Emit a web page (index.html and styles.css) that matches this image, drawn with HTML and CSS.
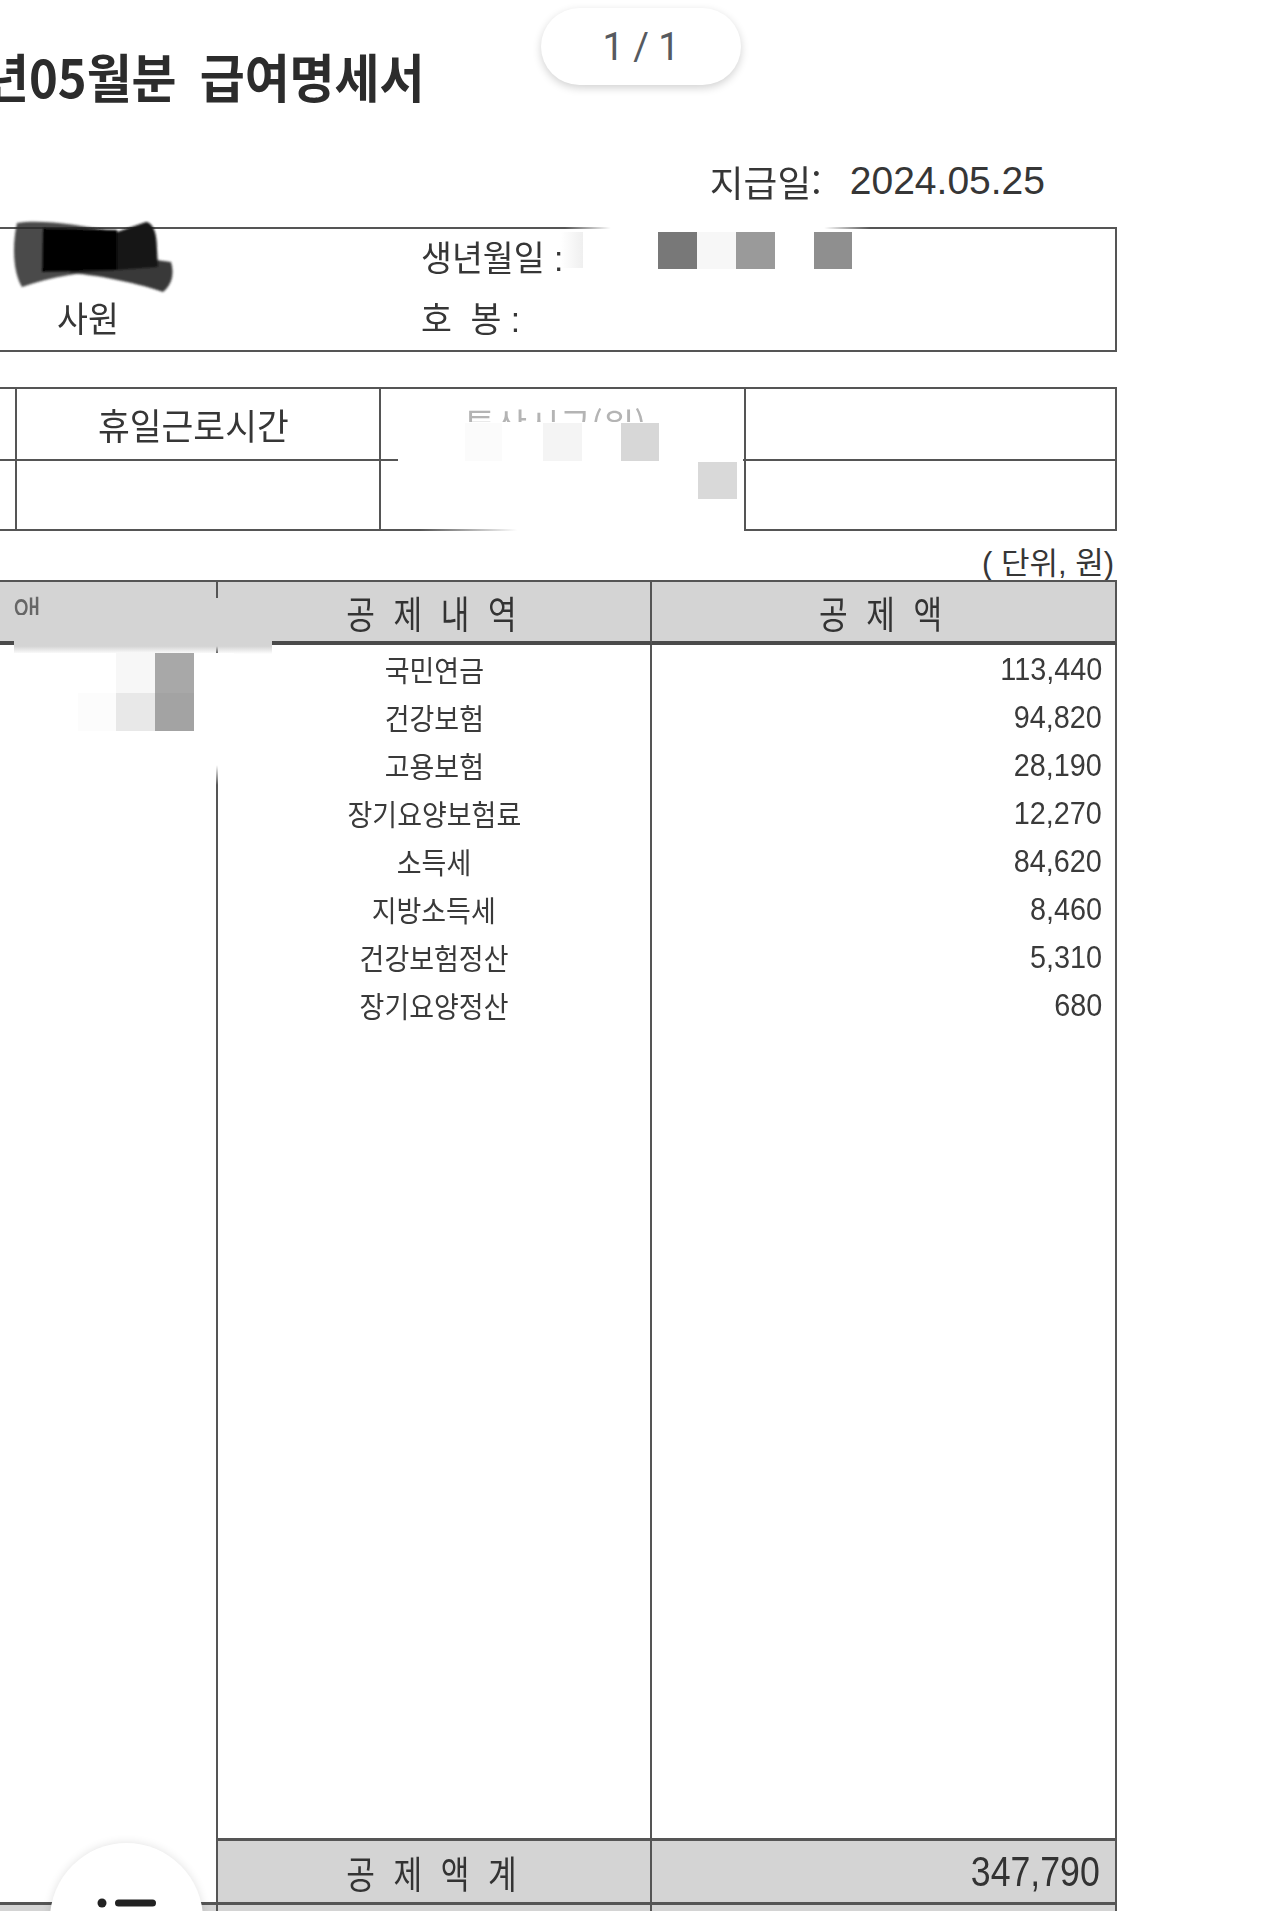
FILE: index.html
```html
<!DOCTYPE html>
<html lang="ko">
<head>
<meta charset="utf-8">
<title>급여명세서</title>
<link rel="stylesheet" href="styles.css">
</head>
<body>
<div class="viewer">
  <div class="doc">
    <div class="title"><span class="tx">년05월분 급여명세서</span></div>

    <div class="paydate"><span class="pd-label">지급일:</span><span class="pd-date">2024.05.25</span></div>

    <div class="info">
      <div class="info-cell"></div>
      <div class="info-cell"><span>생년월일 :</span></div>
      <div class="info-cell info-name"><span>사원</span></div>
      <div class="info-cell"><span>호&nbsp;&nbsp;봉 :</span></div>

      <svg class="scribble" width="165" height="82" viewBox="0 0 165 82">
        <defs><filter id="soft" x="-10%" y="-10%" width="120%" height="120%"><feGaussianBlur stdDeviation="1.2"/></filter></defs>
        <g filter="url(#soft)">
          <path d="M7,8 C30,4 70,10 107,17 L107,55 C75,56 40,62 12,72 C3,58 2,30 7,8 Z" fill="#2b2b2b" opacity="0.85"/>
          <path d="M60,50 C95,47 130,41 161,47 C165,60 161,71 153,77 C130,69 95,61 60,58 Z" fill="#262626" opacity="0.9"/>
          <path d="M33,13 L107,15 L108,55 L32,57 Z" fill="#050505"/>
          <path d="M107,17 L136,7 C144,8 147,20 147,34 L148,52 L107,55 Z" fill="#141414"/>
        </g>
      </svg>
      <div class="mask info-band"></div>
      <div class="mask info-faint"></div>
      <div class="mask sq sq-i1"></div>
      <div class="mask sq sq-i2"></div>
      <div class="mask sq sq-i3"></div>
      <div class="mask sq sq-i4"></div>
    </div>

    <div class="work">
      <div class="wc"></div>
      <div class="wc wc-head"><span>휴일근로시간</span></div>
      <div class="wc wc-faded"><span>통상시급(원)</span></div>
      <div class="wc"></div>
      <div class="wc"></div>
      <div class="wc"></div>
      <div class="wc"></div>
      <div class="wc"></div>

      <div class="mask work-a"></div>
      <div class="mask work-b"></div>
      <div class="mask sq sq-w1"></div>
      <div class="mask sq sq-w2"></div>
      <div class="mask sq sq-w3"></div>
      <div class="mask sq sq-w4"></div>
    </div>

    <div class="unit">( 단위, 원)</div>

    <div class="main">
      <div class="mc mh mh-left"><span>액</span></div>
      <div class="mc mh"><span>공 제 내 역</span></div>
      <div class="mc mh"><span>공 제 액</span></div>

      <div class="mc left-body"></div>

      <div class="mc lbl"><span>국민연금</span></div><div class="mc amt"><span>113,440</span></div>
      <div class="mc lbl"><span>건강보험</span></div><div class="mc amt"><span>94,820</span></div>
      <div class="mc lbl"><span>고용보험</span></div><div class="mc amt"><span>28,190</span></div>
      <div class="mc lbl"><span>장기요양보험료</span></div><div class="mc amt"><span>12,270</span></div>
      <div class="mc lbl"><span>소득세</span></div><div class="mc amt"><span>84,620</span></div>
      <div class="mc lbl"><span>지방소득세</span></div><div class="mc amt"><span>8,460</span></div>
      <div class="mc lbl"><span>건강보험정산</span></div><div class="mc amt"><span>5,310</span></div>
      <div class="mc lbl"><span>장기요양정산</span></div><div class="mc amt"><span>680</span></div>

      <div class="mc"></div><div class="mc"></div>

      <div class="mc total total-lbl"><span>공 제 액 계</span></div>
      <div class="mc total total-amt"><span>347,790</span></div>

      <div class="mc after"></div><div class="mc after"></div><div class="mc after"></div>

      <div class="mask main-g"></div>
      <div class="mask main-g2"></div>
      <div class="mask main-w"></div>
      <div class="mask sq sq-m1"></div>
      <div class="mask sq sq-m2"></div>
      <div class="mask sq sq-m3"></div>
      <div class="mask sq sq-m4"></div>
      <div class="mask sq sq-m5"></div>
    </div>
  </div>

  <div class="pill">1 / 1</div>

  <div class="fab">
    <svg class="fab-icon" width="64" height="50" viewBox="0 0 64 50">
      <circle cx="5" cy="5" r="4.5" fill="#222"/>
      <rect x="18" y="1.5" width="41" height="7" rx="3.5" fill="#222"/>
      <circle cx="5" cy="23" r="4.5" fill="#222"/>
      <rect x="18" y="19.5" width="41" height="7" rx="3.5" fill="#222"/>
      <circle cx="5" cy="41" r="4.5" fill="#222"/>
      <rect x="18" y="37.5" width="41" height="7" rx="3.5" fill="#222"/>
    </svg>
  </div>
</div>
</body>
</html>
```

FILE: styles.css
```css
html, body {
  margin: 0;
  padding: 0;
  background: #fff;
  overflow: hidden;
}

.viewer {
  position: relative;
  width: 1280px;
  height: 1911px;
  overflow: hidden;
  background: #fff;
}

.doc {
  margin-left: -40px;
  width: 1157px;
  font-family: "Noto Sans CJK KR", "Liberation Sans", sans-serif;
  color: #363636;
}

/* ---------- title ---------- */
.title {
  padding-top: 50px;
  padding-left: 24px;
  height: 52px;
  font-size: 52px;
  line-height: 52px;
  font-weight: 700;
  color: #2c2c2c;
  white-space: nowrap;
}
.title .tx {
  display: inline-block;
  transform: scaleX(0.94);
  transform-origin: left center;
  word-spacing: 10px;
}

/* ---------- pay date ---------- */
.paydate {
  margin-top: 59px;
  height: 40px;
  display: flex;
  justify-content: flex-end;
  align-items: center;
  gap: 28px;
  padding-right: 72px;
  white-space: nowrap;
}
.pd-label {
  font-size: 36px;
  line-height: 40px;
  transform: scaleX(1.02);
  transform-origin: right center;
}
.pd-date {
  font-family: "Liberation Sans", sans-serif;
  font-size: 39px;
  line-height: 40px;
}

/* ---------- info box ---------- */
.info {
  position: relative;
  margin-top: 26px;
  height: 125px;
  box-sizing: border-box;
  border: 2px solid #555;
  display: grid;
  grid-template-columns: 459px 1fr;
  grid-template-rows: 60px 61px;
  font-size: 35px;
}
.info-cell {
  display: flex;
  align-items: center;
  line-height: 36px;
  white-space: nowrap;
}
.info-cell span {
  display: inline-block;
  transform: scaleX(0.96);
  transform-origin: left center;
  font-family: "Liberation Sans", "Noto Sans CJK KR", sans-serif;
}
.info-name {
  padding-left: 95px;
}

.scribble {
  position: absolute;
  left: 48px;
  top: -14px;
}

.mask {
  position: absolute;
}
.info-band {
  left: 603px;
  top: -8px;
  width: 305px;
  height: 12px;
  background: linear-gradient(90deg, rgba(255,255,255,0), #fff 15%, #fff 85%, rgba(255,255,255,0));
}
.info-faint {
  left: 599px;
  top: 3px;
  width: 22px;
  height: 36px;
  background: linear-gradient(90deg, rgba(240,240,240,0), #efefef);
}
.sq { width: 39px; height: 37px; }
.sq-i1 { left: 696px; top: 3px; background: #787878; }
.sq-i2 { left: 735px; top: 3px; background: #f7f7f7; }
.sq-i3 { left: 774px; top: 3px; background: #9a9a9a; }
.sq-i4 { left: 852px; top: 3px; width: 38px; background: #8f8f8f; }

/* ---------- work hours table ---------- */
.work {
  position: relative;
  margin-top: 35px;
  display: grid;
  grid-template-columns: 53px 362px 363px 369px;
  grid-template-rows: 70px 68px;
  gap: 2px;
  padding: 2px;
  background: #555;
}
.wc {
  background: #fff;
  display: flex;
  align-items: center;
  justify-content: center;
  font-size: 36px;
  line-height: 38px;
  white-space: nowrap;
}
.wc span {
  display: inline-block;
  transform: scaleX(0.96);
}
.wc-head {
  padding-right: 9px;
}
.wc-faded {
  color: #b4b4b4;
  padding-right: 16px;
}
.work-a {
  left: 438px;
  top: 35px;
  width: 345px;
  height: 55px;
  background: #fff;
}
.work-b {
  left: 460px;
  top: 136px;
  width: 324px;
  height: 13px;
  background: linear-gradient(90deg, rgba(255,255,255,0), #fff 30%);
}
.sq-w1 { left: 505px; top: 36px; width: 37px; height: 38px; background: #fbfbfb; }
.sq-w2 { left: 583px; top: 36px; height: 38px; background: #f4f4f4; }
.sq-w3 { left: 661px; top: 36px; width: 38px; height: 38px; background: #d7d7d7; }
.sq-w4 { left: 738px; top: 75px; height: 37px; background: #d9d9d9; }

/* ---------- unit ---------- */
.unit {
  margin-top: 18px;
  text-align: right;
  padding-right: 3px;
  font-family: "Liberation Sans", "Noto Sans CJK KR", sans-serif;
  font-size: 31px;
  line-height: 30px;
  white-space: nowrap;
}

/* ---------- main deduction table ---------- */
.main {
  position: relative;
  margin-top: 1px;
  border-top: 2px solid #555;
  display: grid;
  grid-template-columns: 258px 434px 465px;
  grid-template-rows: 63px repeat(8, 48px) 809px 67px 55px;
}
.mc {
  box-sizing: border-box;
  border-right: 2px solid #555;
  display: flex;
  align-items: center;
  white-space: nowrap;
}
.mc span {
  display: inline-block;
}
.mh {
  background: #d4d4d4;
  border-bottom: 4px solid #4a4a4a;
  justify-content: center;
  font-size: 38px;
  line-height: 40px;
  letter-spacing: 6px;
  color: #333;
}
.mh span {
  transform: scaleX(0.82);
}
.mh-left {
  justify-content: flex-start;
  padding-left: 53px;
  color: #666;
}
.mh-left span {
  transform-origin: left center;
}
.left-body {
  grid-column: 1;
  grid-row: 2 / 12;
  border-bottom: 3px solid #555;
}
.lbl {
  justify-content: center;
  font-size: 29px;
  line-height: 32px;
  color: #3a3a3a;
}
.lbl span {
  transform: scaleX(0.93);
}
.amt {
  justify-content: flex-end;
  padding-right: 13px;
  font-family: "Liberation Sans", sans-serif;
  font-size: 32px;
  line-height: 34px;
  color: #3a3a3a;
}
.amt span {
  transform: scaleX(0.9);
  transform-origin: right center;
}
.total {
  background: #d4d4d4;
  border-top: 3px solid #555;
  border-bottom: 3px solid #555;
}
.total-lbl {
  justify-content: center;
  font-size: 38px;
  line-height: 40px;
  letter-spacing: 6px;
  color: #333;
}
.total-lbl span {
  transform: scaleX(0.82);
}
.total-amt {
  justify-content: flex-end;
  font-family: "Liberation Sans", sans-serif;
  font-size: 42px;
  line-height: 44px;
  padding-right: 15px;
  color: #333;
}
.total-amt span {
  transform: scaleX(0.85);
  transform-origin: right center;
}
.after {
  background: #d4d4d4;
}

.main-g {
  left: 54px;
  top: 33px;
  width: 258px;
  height: 39px;
  background: linear-gradient(to bottom, #d4d4d4 80%, rgba(212,212,212,0));
}
.main-g2 {
  left: 245px;
  top: 16px;
  width: 25px;
  height: 18px;
  background: #d4d4d4;
}
.main-w {
  left: 40px;
  top: 71px;
  width: 234px;
  height: 132px;
  background: linear-gradient(to bottom, #fff 85%, rgba(255,255,255,0));
}
.sq-m1 { left: 156px; top: 71px; height: 40px; background: #f7f7f7; }
.sq-m2 { left: 195px; top: 71px; height: 40px; background: #a8a8a8; }
.sq-m3 { left: 118px; top: 111px; width: 38px; height: 38px; background: #fcfcfc; }
.sq-m4 { left: 156px; top: 111px; height: 38px; background: #e8e8e8; }
.sq-m5 { left: 195px; top: 111px; height: 38px; background: #a3a3a3; }

/* ---------- floating viewer controls ---------- */
.pill {
  position: absolute;
  left: 541px;
  top: 8px;
  width: 200px;
  height: 77px;
  border-radius: 39px;
  background: #fff;
  box-shadow: 0 3px 9px rgba(0, 0, 0, 0.18);
  display: flex;
  align-items: center;
  justify-content: center;
  font-family: Roboto, "Liberation Sans", sans-serif;
  font-size: 38px;
  color: #565a60;
}

.fab {
  position: absolute;
  left: 50px;
  top: 1843px;
  width: 153px;
  height: 153px;
  border-radius: 50%;
  background: #fff;
  box-shadow: 0 0 10px rgba(0, 0, 0, 0.12);
}
.fab-icon {
  position: absolute;
  left: 47px;
  top: 55px;
}
```
